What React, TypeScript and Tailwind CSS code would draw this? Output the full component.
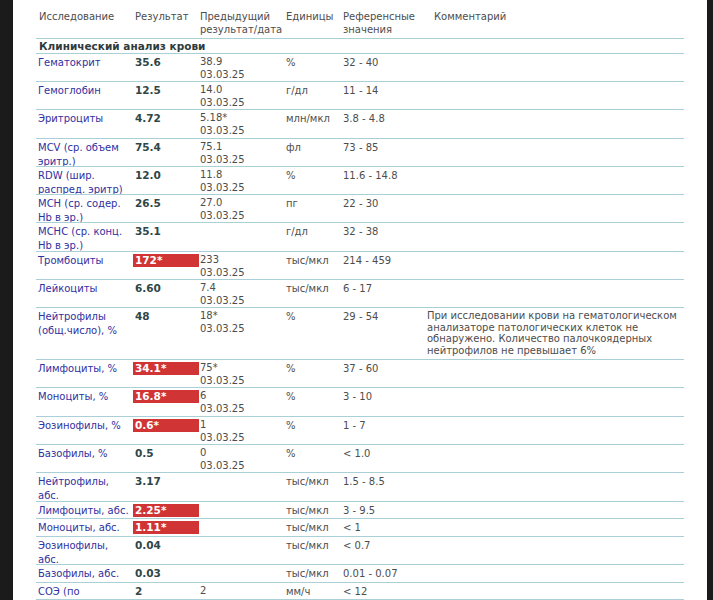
import React from "react";

type Row = {
  name: string[];
  result: string;
  flag?: boolean;
  prev?: string;
  unit: string;
  range: string;
  comment?: string[];
  h: string;
};

const rows: Row[] = [
  { name: ["Гематокрит"], result: "35.6", prev: "38.9", unit: "%", range: "32 - 40", h: "h-[28px]" },
  { name: ["Гемоглобин"], result: "12.5", prev: "14.0", unit: "г/дл", range: "11 - 14", h: "h-[28px]" },
  { name: ["Эритроциты"], result: "4.72", prev: "5.18*", unit: "млн/мкл", range: "3.8 - 4.8", h: "h-[29px]" },
  { name: ["MCV (ср. объем", "эритр.)"], result: "75.4", prev: "75.1", unit: "фл", range: "73 - 85", h: "h-[28px]" },
  { name: ["RDW (шир.", "распред. эритр)"], result: "12.0", prev: "11.8", unit: "%", range: "11.6 - 14.8", h: "h-[28px]" },
  { name: ["MCH (ср. содер.", "Hb в эр.)"], result: "26.5", prev: "27.0", unit: "пг", range: "22 - 30", h: "h-[28px]" },
  { name: ["MCHC (ср. конц.", "Hb в эр.)"], result: "35.1", unit: "г/дл", range: "32 - 38", h: "h-[29px]" },
  { name: ["Тромбоциты"], result: "172*", flag: true, prev: "233", unit: "тыс/мкл", range: "214 - 459", h: "h-[28px]" },
  { name: ["Лейкоциты"], result: "6.60", prev: "7.4", unit: "тыс/мкл", range: "6 - 17", h: "h-[28px]" },
  {
    name: ["Нейтрофилы", "(общ.число), %"],
    result: "48",
    prev: "18*",
    unit: "%",
    range: "29 - 54",
    comment: [
      "При исследовании крови на гематологическом",
      "анализаторе патологических клеток не",
      "обнаружено. Количество палочкоядерных",
      "нейтрофилов не превышает 6%",
    ],
    h: "h-[52px]",
  },
  { name: ["Лимфоциты, %"], result: "34.1*", flag: true, prev: "75*", unit: "%", range: "37 - 60", h: "h-[28px]" },
  { name: ["Моноциты, %"], result: "16.8*", flag: true, prev: "6", unit: "%", range: "3 - 10", h: "h-[29px]" },
  { name: ["Эозинофилы, %"], result: "0.6*", flag: true, prev: "1", unit: "%", range: "1 - 7", h: "h-[28px]" },
  { name: ["Базофилы, %"], result: "0.5", prev: "0", unit: "%", range: "< 1.0", h: "h-[28px]" },
  { name: ["Нейтрофилы,", "абс."], result: "3.17", unit: "тыс/мкл", range: "1.5 - 8.5", h: "h-[29px]" },
  { name: ["Лимфоциты, абс."], result: "2.25*", flag: true, unit: "тыс/мкл", range: "3 - 9.5", h: "h-[17px]" },
  { name: ["Моноциты, абс."], result: "1.11*", flag: true, unit: "тыс/мкл", range: "< 1", h: "h-[18px]" },
  { name: ["Эозинофилы,", "абс."], result: "0.04", unit: "тыс/мкл", range: "< 0.7", h: "h-[28px]" },
  { name: ["Базофилы, абс."], result: "0.03", unit: "тыс/мкл", range: "0.01 - 0.07", h: "h-[18px]" },
  { name: ["СОЭ (по"], result: "2", prev: "2", unit: "мм/ч", range: "< 12", h: "h-[17px]" },
];

const cols = "grid grid-cols-[97px_66px_86px_57px_83px_259px]";

function LabRow({ r }: { r: Row }) {
  return (
    <div className={`${cols} ${r.h} border-b border-[#a9d0d6] pt-[2px] overflow-hidden`}>
      <div className="pl-[2px] leading-[13.5px] text-[#3030a0] whitespace-nowrap">
        {r.name.map((n) => (
          <div key={n}>{n}</div>
        ))}
      </div>
      <div>
        {r.flag ? (
          <div className="h-[13px] bg-[#d03434] pl-[2px] text-[10.5px] font-bold leading-[13px] text-white">
            {r.result}
          </div>
        ) : (
          <div className="pl-[2px] text-[10.5px] font-bold leading-[13px] text-[#2f4646]">{r.result}</div>
        )}
      </div>
      <div className="pl-[1px] leading-[12.6px] text-[#4d4d4d]">
        {r.prev && (
          <>
            <div>{r.prev}</div>
            {r.prev !== "2" && <div>03.03.25</div>}
          </>
        )}
      </div>
      <div className="pl-[1px] leading-[13px] text-[#4d4d4d]">{r.unit}</div>
      <div className="pl-[1px] leading-[13px] text-[#4d4d4d]">{r.range}</div>
      <div className="pl-[2px] leading-[11.6px] text-[#4d4d4d] whitespace-nowrap">
        {r.comment?.map((c) => (
          <div key={c}>{c}</div>
        ))}
      </div>
    </div>
  );
}

export default function App() {
  return (
    <div className="flex h-[600px] w-[713px] overflow-hidden bg-white font-['DejaVu_Sans',sans-serif] text-[10px]">
      <div className="w-[13px] shrink-0 bg-[#1b1b1b]" />
      <div className="flex-1 pl-[23px] pt-[8px]">
        <div className="w-[648px]">
          <div className={`${cols} h-[31px] border-b border-[#a9d0d6] pt-[3px] leading-[12.7px] text-[#4d4d4d]`}>
            <div className="pl-[3px]">Исследование</div>
            <div className="pl-[2px]">Результат</div>
            <div className="pl-[1px]">
              <div>Предыдущий</div>
              <div>результат/дата</div>
            </div>
            <div className="pl-[1px]">Единицы</div>
            <div className="pl-[1px]">
              <div>Референсные</div>
              <div>значения</div>
            </div>
            <div className="pl-[9px]">Комментарий</div>
          </div>
          <div className="h-[15px] border-b border-[#a9d0d6] pl-[3px] text-[10.5px] font-bold leading-[14px] text-[#2f3b3b]">
            Клинический анализ крови
          </div>
          {rows.map((r) => (
            <LabRow key={r.name.join(" ")} r={r} />
          ))}
        </div>
      </div>
      <div className="w-[6px] shrink-0 bg-[#1b1b1b]" />
    </div>
  );
}
